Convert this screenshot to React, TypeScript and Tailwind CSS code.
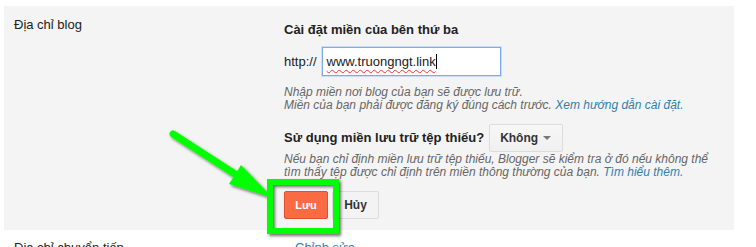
import React from "react";

function Annotation() {
  return (
    <svg
      className="pointer-events-none absolute left-0 top-0"
      width={756}
      height={247}
      viewBox="0 0 756 247"
    >
      <defs>
        <filter id="shadow" x="-20%" y="-20%" width="140%" height="140%">
          <feDropShadow dx="2" dy="2" stdDeviation="1.6" floodColor="#000" floodOpacity="0.55" />
        </filter>
      </defs>
      <g filter="url(#shadow)">
        <line x1={173} y1={134} x2={238} y2={176} stroke="#00ff00" strokeWidth={7} strokeLinecap="round" />
        <polygon points="229,184 241,165 273,198" fill="#00ff00" />
        <rect x={270} y={182} width={66} height={49} fill="none" stroke="#00ff00" strokeWidth={6} />
      </g>
    </svg>
  );
}

export default function App() {
  return (
    <div className="relative h-[247px] w-[756px] overflow-hidden bg-white font-['Liberation_Sans',Arial,sans-serif] text-[13px] text-[#222]">
      <div className="ml-[4px] mt-[6px] flex h-[224px] w-[730px] bg-[#f4f4f4]">
        <div className="w-[280px] pl-[10px] pt-[11px] leading-[16px]">Địa chỉ blog</div>
        <div className="flex flex-col pt-[16px]">
          <div className="font-bold leading-[16px]">Cài đặt miền của bên thứ ba</div>
          <div className="mt-[9px] flex items-center gap-[5px]">
            <span>http://</span>
            <div className="flex h-[29px] w-[179px] items-center border border-[#7eaaf0] bg-white pl-[4px] shadow-[0_0_0_1px_#c9dcfa]">
              <span className="underline decoration-[#e33] decoration-wavy decoration-1 underline-offset-[3px]">
                www.truongngt.link
              </span>
              <span className="h-[15px] w-px bg-black" />
            </div>
          </div>
          <div className="mt-[10px] text-[12px] italic leading-[13px] text-[#666]">
            Nhập miền nơi blog của bạn sẽ được lưu trữ.
            <br />
            Miền của bạn phải được đăng ký đúng cách trước.{" "}
            <span className="text-[#2f7fb0]">Xem hướng dẫn cài đặt.</span>
          </div>
          <div className="mt-[12px] flex items-center gap-[5px]">
            <span className="font-bold">Sử dụng miền lưu trữ tệp thiếu?</span>
            <div className="flex h-[28px] w-[74px] items-center rounded-[2px] border border-[#dcdcdc] bg-gradient-to-b from-[#f7f7f7] to-[#f0f0f0] pl-[10px] pr-[11px]">
              <span className="text-[12px] font-bold text-[#333]">Không</span>
              <span className="ml-auto h-0 w-0 border-x-[4px] border-t-[4px] border-x-transparent border-t-[#777]" />
            </div>
          </div>
          <div className="mt-[1px] text-[12px] italic leading-[13px] text-[#666]">
            Nếu bạn chỉ định miền lưu trữ tệp thiếu, Blogger sẽ kiểm tra ở đó nếu không thể
            <br />
            tìm thấy tệp được chỉ định trên miền thông thường của bạn.{" "}
            <span className="text-[#2f7fb0]">Tìm hiểu thêm.</span>
          </div>
          <div className="mt-[12px] flex gap-[4px]">
            <button className="h-[28px] w-[44px] rounded-[2px] border border-[#e0512d] bg-[#fa6b44] text-[11px] font-bold text-white">
              Lưu
            </button>
            <button className="h-[28px] w-[47px] rounded-[2px] border border-[#dcdcdc] bg-[#f3f3f3] text-[12px] font-bold text-[#333]">
              Hủy
            </button>
          </div>
        </div>
      </div>
      <div className="mt-[10px] flex leading-[16px]">
        <div className="w-[295px] pl-[14px]">Địa chỉ chuyển tiếp</div>
        <div className="text-[#2f7fb0]">Chỉnh sửa</div>
      </div>
      <Annotation />
    </div>
  );
}
